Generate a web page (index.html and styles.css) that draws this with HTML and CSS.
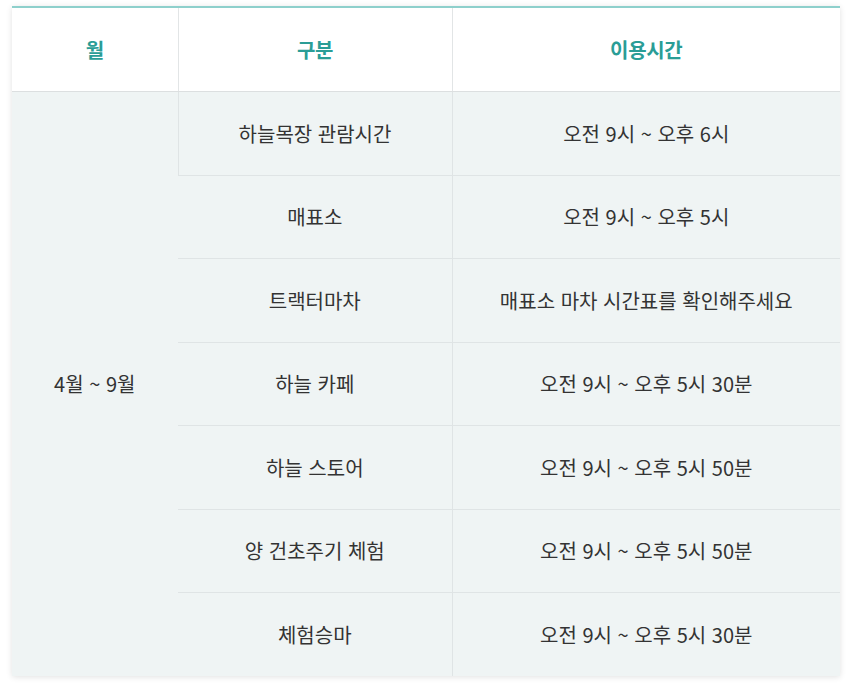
FILE: index.html
```html
<!DOCTYPE html>
<html lang="ko">
<head>
<meta charset="utf-8">
<link rel="stylesheet" href="styles.css">
</head>
<body>
<div class="page">
  <div class="card">
    <table class="schedule">
      <colgroup>
        <col class="c-month">
        <col class="c-kind">
        <col class="c-time">
      </colgroup>
      <thead>
        <tr>
          <th>월</th>
          <th>구분</th>
          <th>이용시간</th>
        </tr>
      </thead>
      <tbody>
        <tr>
          <td class="month" rowspan="7">4월 ~ 9월</td>
          <td class="kind first">하늘목장 관람시간</td>
          <td>오전 9시 ~ 오후 6시</td>
        </tr>
        <tr><td class="kind">매표소</td><td>오전 9시 ~ 오후 5시</td></tr>
        <tr><td class="kind">트랙터마차</td><td>매표소 마차 시간표를 확인해주세요</td></tr>
        <tr><td class="kind">하늘 카페</td><td>오전 9시 ~ 오후 5시 30분</td></tr>
        <tr><td class="kind">하늘 스토어</td><td>오전 9시 ~ 오후 5시 50분</td></tr>
        <tr><td class="kind">양 건초주기 체험</td><td>오전 9시 ~ 오후 5시 50분</td></tr>
        <tr class="last"><td class="kind">체험승마</td><td>오전 9시 ~ 오후 5시 30분</td></tr>
      </tbody>
    </table>
  </div>
</div>
</body>
</html>
```
FILE: styles.css
```css
html, body {
  margin: 0;
  padding: 0;
  background: #ffffff;
}
.page {
  padding: 6px 10px 10px 12px;
}
.card {
  width: 828px;
  background: #eff4f4;
  border-top: 2px solid #8ed0cc;
  box-shadow: 0 1px 6px rgba(0, 0, 0, 0.12);
}
.schedule {
  width: 100%;
  border-collapse: collapse;
  table-layout: fixed;
  font-family: "Noto Sans CJK KR", "Noto Sans", sans-serif;
  font-size: 20px;
  color: #333333;
  letter-spacing: 0;
}
.c-month { width: 166px; }
.c-kind { width: 274px; }
.c-time { width: 388px; }
.schedule th {
  height: 83px;
  padding: 0;
  background: #ffffff;
  color: #2a9d96;
  font-weight: 700;
  text-align: center;
  letter-spacing: -0.3px;
  border-bottom: 1px solid #dcdfe0;
}
.schedule th + th {
  border-left: 1px solid #e2e5e6;
}
.schedule td {
  height: 82.5px;
  padding: 0;
  text-align: center;
  font-weight: 400;
  border-bottom: 1px solid #dfe4e5;
}
.schedule td.kind {
  border-right: 1px solid #dfe4e5;
}
.schedule td.kind.first {
  border-left: 1px solid #dfe4e5;
}
.schedule td.month {
  border-bottom: none;
}
.schedule tr.last td {
  border-bottom: none;
}
```
